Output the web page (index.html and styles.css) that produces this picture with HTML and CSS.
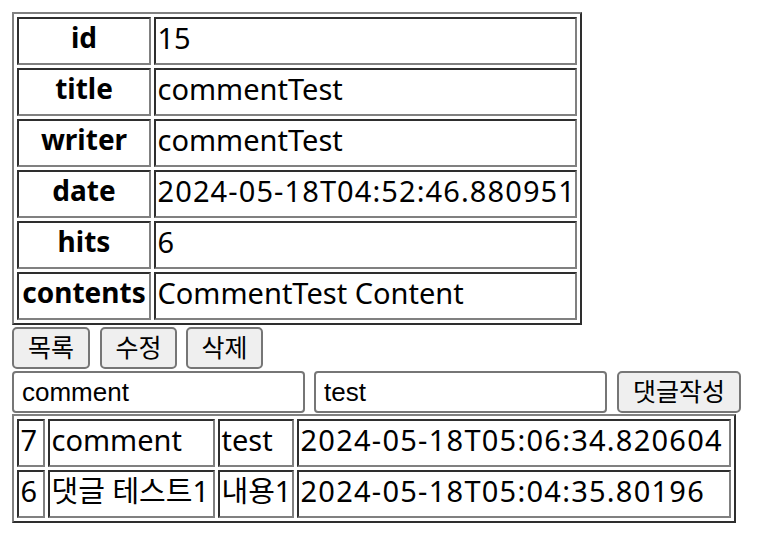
FILE: index.html
```html
<!DOCTYPE html>
<html lang="ko">
<head>
<meta charset="utf-8">
<title>board detail</title>
<link rel="stylesheet" href="styles.css">
</head>
<body>
<table class="grid detail">
  <tr><th class="label">id</th><td class="value">15</td></tr>
  <tr><th class="label">title</th><td class="value">commentTest</td></tr>
  <tr><th class="label">writer</th><td class="value">commentTest</td></tr>
  <tr><th class="label">date</th><td class="value num">2024-05-18T04:52:46.880951</td></tr>
  <tr><th class="label">hits</th><td class="value">6</td></tr>
  <tr><th class="label">contents</th><td class="value">CommentTest Content</td></tr>
</table>
<div class="actions">
  <button class="btn w1">목록</button>
  <button class="btn w2">수정</button>
  <button class="btn w2">삭제</button>
</div>
<div class="comment-form">
  <input class="field" type="text" value="comment">
  <input class="field" type="text" value="test">
  <button class="btn submit">댓글작성</button>
</div>
<table class="grid comments">
  <tr><td class="c1">7</td><td class="c2">comment</td><td class="c3">test</td><td class="c4 num">2024-05-18T05:06:34.820604</td></tr>
  <tr><td class="c1">6</td><td class="c2">댓글 테스트1</td><td class="c3">내용1</td><td class="c4 num">2024-05-18T05:04:35.80196</td></tr>
</table>
</body>
</html>
```
FILE: styles.css
```css
* { box-sizing: border-box; }
body {
  margin: 12px;
  font-family: "Noto Sans", "Noto Sans CJK KR", sans-serif;
  color: #000;
  background: #fff;
}
.grid {
  border-collapse: separate;
  border-spacing: 3px;
  border: 2px solid;
  border-color: #808080 #2e2e2e #2e2e2e #808080;
  table-layout: fixed;
  font-size: 29px;
}
.grid th, .grid td {
  border: 2px solid;
  border-color: #2e2e2e #808080 #808080 #2e2e2e;
  height: 48px;
  padding: 0 1.5px;
  line-height: 37px;
  vertical-align: top;
  white-space: nowrap;
  overflow: hidden;
}
.detail { width: 570px; }
.label { width: 134px; text-align: center; font-weight: bold; font-size: 28px; }
.value { width: 423px; text-align: left; }
.num { letter-spacing: 1.1px; }
.comments { width: 724px; margin-top: 1px; }
.comments .num { letter-spacing: 1.25px; }
.c1 { width: 28px; }
.c2 { width: 167px; }
.c3 { width: 76px; }
.c4 { width: 434px; }

.actions {
  display: flex;
  gap: 9px;
  margin-top: 2px;
  height: 42px;
}
.btn {
  font-family: "Noto Sans CJK KR", sans-serif;
  font-size: 25px;
  height: 42px;
  padding: 0 0 3px;
  background: #efefef;
  border: 2px solid #767676;
  border-radius: 5px;
  color: #000;
  line-height: 1;
}
.w1 { width: 78px; margin-right: 1px; }
.w2 { width: 77px; }
.comment-form {
  display: flex;
  gap: 9px;
  margin-top: 2px;
  height: 42px;
}
.field {
  width: 293px;
  height: 42px;
  border: 2px solid #767676;
  border-radius: 4px;
  padding: 0 8px;
  font-family: "Liberation Sans", Arial, sans-serif;
  font-size: 26px;
  color: #000;
  background: #fff;
}
.submit { width: 124px; margin-left: 1px; }
```
